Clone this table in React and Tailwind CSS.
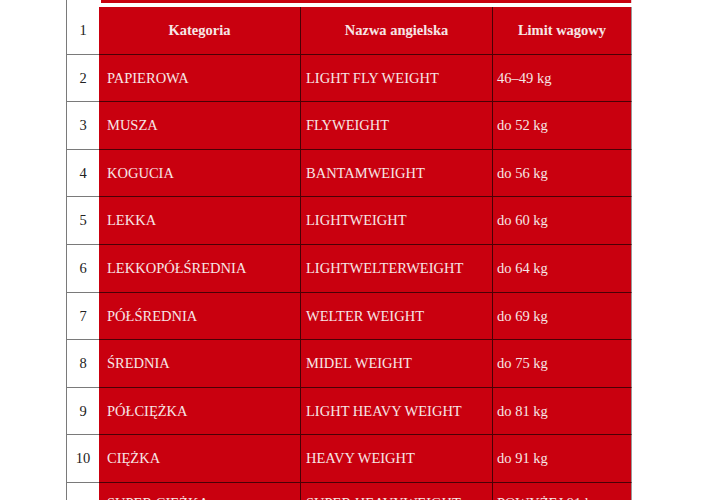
import React from "react";

const rows = [
  ["2", "PAPIEROWA", "LIGHT FLY WEIGHT", "46–49 kg"],
  ["3", "MUSZA", "FLYWEIGHT", "do 52 kg"],
  ["4", "KOGUCIA", "BANTAMWEIGHT", "do 56 kg"],
  ["5", "LEKKA", "LIGHTWEIGHT", "do 60 kg"],
  ["6", "LEKKOPÓŁŚREDNIA", "LIGHTWELTERWEIGHT", "do 64 kg"],
  ["7", "PÓŁŚREDNIA", "WELTER WEIGHT", "do 69 kg"],
  ["8", "ŚREDNIA", "MIDEL WEIGHT", "do 75 kg"],
  ["9", "PÓŁCIĘŻKA", "LIGHT HEAVY WEIGHT", "do 81 kg"],
  ["10", "CIĘŻKA", "HEAVY WEIGHT", "do 91 kg"],
];

function Row({ n, a, b, c, header, last }) {
  const align = last ? "items-start pt-[12px]" : "items-center";
  const txt = header ? "font-bold justify-center" : "";
  return (
    <div className="flex h-[47.6px]">
      <div className="w-[33px] shrink-0 border-l border-b border-[#7a7a7a] bg-white flex items-center justify-center text-[#222]">
        {n}
      </div>
      <div className={`w-[202px] shrink-0 bg-[#c9000f] border-b border-r border-[#4a0005] text-[#f6e6e6] flex ${header ? "" : "pl-[8px]"} ${txt} ${align}`}>
        {a}
      </div>
      <div className={`w-[192px] shrink-0 bg-[#c9000f] border-b border-r border-[#4a0005] text-[#f6e6e6] flex ${header ? "" : "pl-[5px]"} ${txt} ${align}`}>
        {b}
      </div>
      <div className={`w-[139px] shrink-0 bg-[#c9000f] border-b border-r border-b-[#4a0005] border-r-[#9a9a9a] text-[#f6e6e6] flex ${header ? "" : "pl-[4px]"} ${txt} ${align}`}>
        {c}
      </div>
    </div>
  );
}

export default function App() {
  return (
    <div
      className="w-[720px] h-[500px] overflow-hidden bg-white text-[14.5px] leading-[1.15]"
      style={{ fontFamily: '"Liberation Serif", "Times New Roman", serif' }}
    >
      <div className="ml-[66px] mt-[-40.6px]">
        <div className="flex h-[47.6px]">
          <div className="w-[33px] shrink-0 border-l border-[#7a7a7a] bg-white"></div>
          <div className="w-[533px] shrink-0 bg-white flex flex-col pl-[2px] pb-[4px]">
            <div className="flex-1 bg-[#c9000f] border-r border-[#e8d0d0]"></div>
          </div>
        </div>
        <Row n="1" a="Kategoria" b="Nazwa angielska" c="Limit wagowy" header />
        {rows.map((r) => (
          <Row key={r[0]} n={r[0]} a={r[1]} b={r[2]} c={r[3]} />
        ))}
        <Row n="11" a="SUPER CIĘŻKA" b="SUPER HEAVYWEIGHT" c="POWYŻEJ 91 kg" last />
      </div>
    </div>
  );
}
